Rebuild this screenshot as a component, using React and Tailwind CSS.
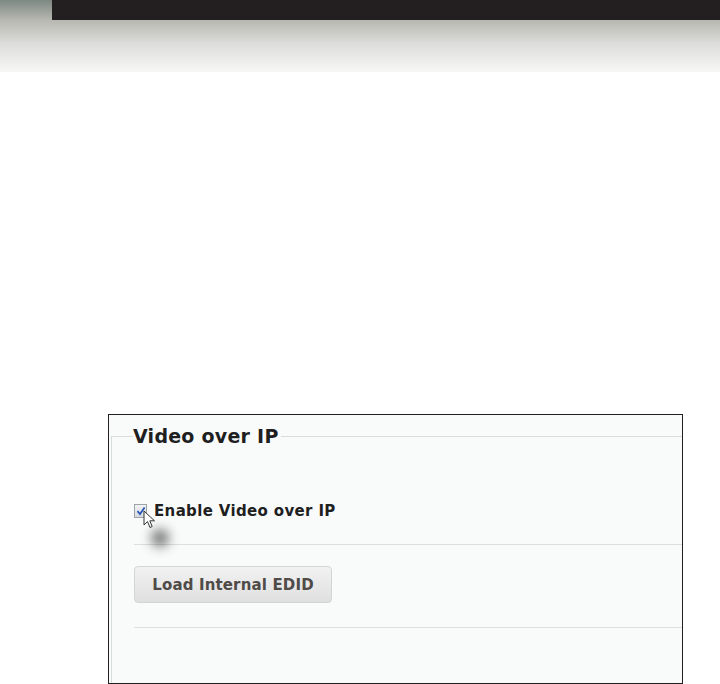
export default function App() {
    return (
        <div className="w-[720px] h-[684px] bg-white overflow-hidden" style={{ fontFamily: '"DejaVu Sans", Verdana, sans-serif' }}>
            {/* top banner */}
            <div className="h-[72px] bg-[linear-gradient(to_bottom,#7d8882_0%,#b7b8b1_28%,#dcdcd9_60%,#f7f7f7_100%)]">
                <div className="ml-[52px] h-[20px] bg-[#231f20]"></div>
            </div>

            {/* screenshot frame */}
            <div className="ml-[108px] mt-[342px] w-[575px] h-[270px] border border-[#231f20] bg-[#f9fbfb] overflow-hidden relative">
                <fieldset className="ml-[2px] mt-[12px] w-[620px] h-[300px] border-l border-t border-[#d8dcdc]">
                    <legend className="ml-[21px] pr-[2px] text-[19px] leading-[19px] font-bold tracking-[0.25px] text-[#1f1f1f]">Video over IP</legend>

                    <div className="ml-[22px] mt-[54px] flex items-center gap-[7px]">
                        <div className="w-[13px] h-[14px] border border-[#9ea3a8] bg-[linear-gradient(to_bottom,#f1f3f5,#d6dadd)] flex items-center justify-center">
                            <svg width="10" height="10" viewBox="0 0 10 10">
                                <path d="M1.5 5.2 L4 8 L8.6 1.5" fill="none" stroke="#2b56b8" strokeWidth="1.8" />
                            </svg>
                        </div>
                        <span className="text-[15px] font-bold tracking-[0.35px] text-[#1f1f1f]">Enable Video over IP</span>
                    </div>

                    <div className="ml-[22px] mt-[21px] border-t border-[#dcdfdf]"></div>

                    <button className="ml-[22px] mt-[21px] w-[198px] h-[37px] pt-[3px] rounded-[4px] border border-[#d3d5d5] bg-[linear-gradient(to_bottom,#f2f2f2,#dfdfdf)] text-[15px] font-bold tracking-[0.15px] text-[#4f4b48]">
                        Load Internal EDID
                    </button>

                    <div className="ml-[22px] mt-[24px] border-t border-[#dcdfdf]"></div>
                </fieldset>

                {/* mouse pointer */}
                <div className="absolute left-[42px] top-[114px] w-[18px] h-[18px] rounded-full bg-[#3a3a3a] blur-[6px] opacity-70"></div>
                <svg className="absolute left-[34px] top-[95px]" width="14" height="20" viewBox="0 0 14 20">
                    <path d="M1 1 L1 15 L4.5 11.5 L7 17.5 L9.2 16.5 L6.8 10.8 L11.5 10.8 Z" fill="#ffffff" stroke="#333" strokeWidth="1" strokeLinejoin="round" />
                </svg>
            </div>
        </div>
    )
}
